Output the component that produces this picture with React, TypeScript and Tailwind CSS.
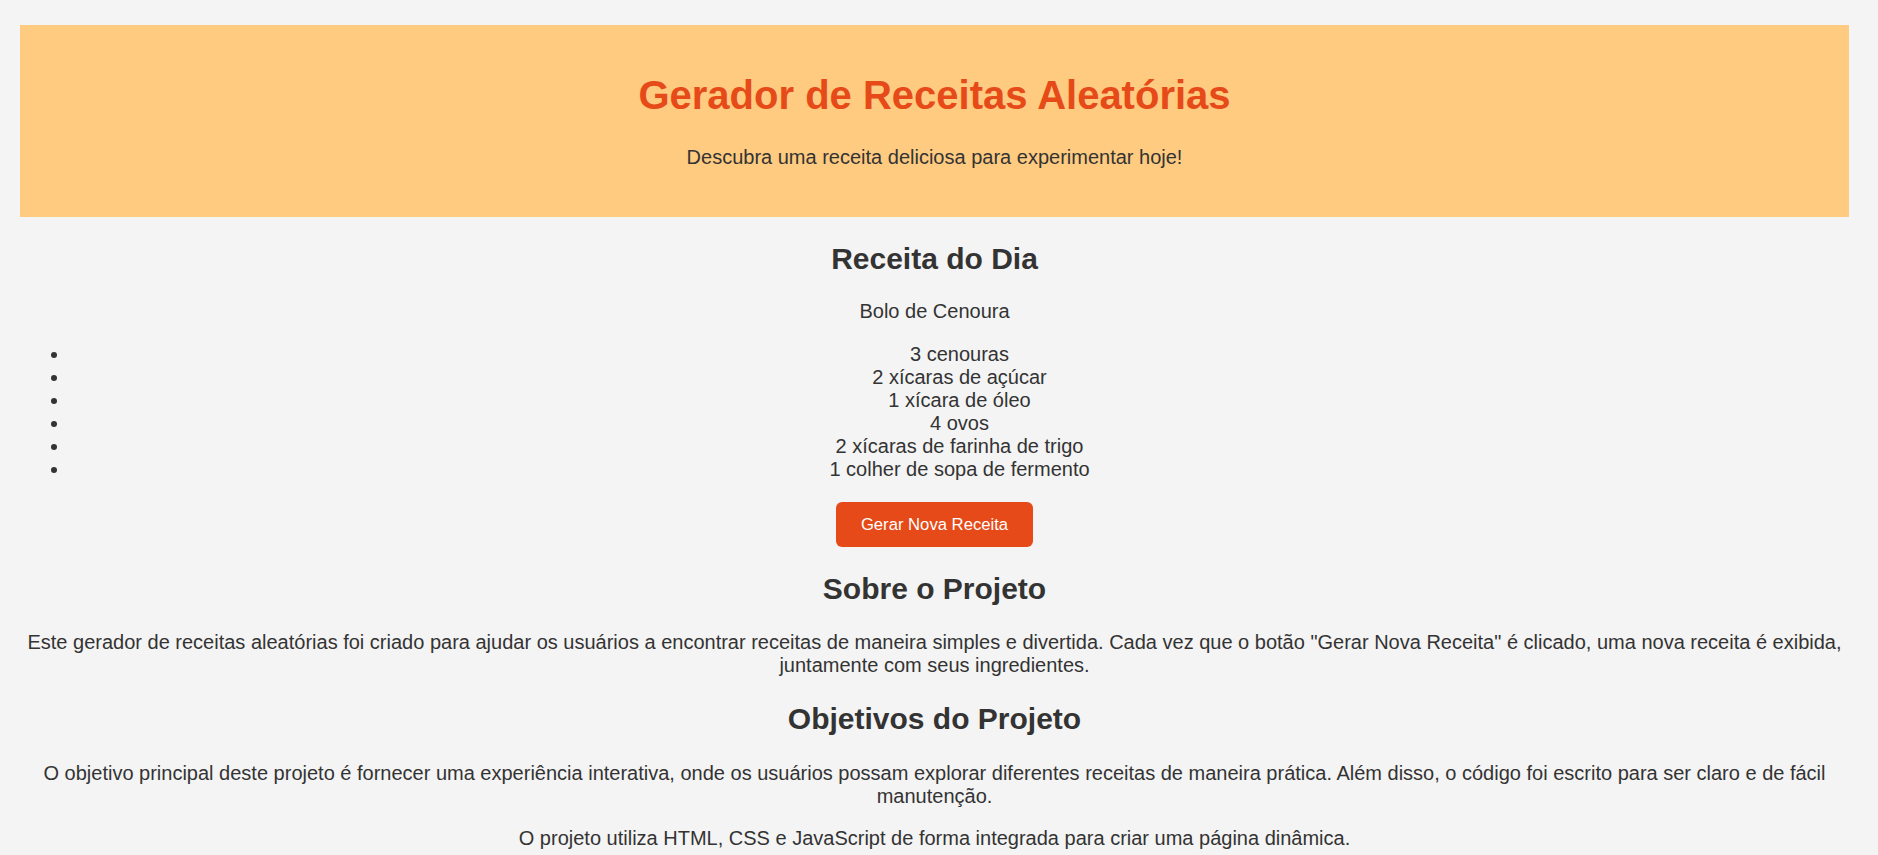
import React from "react";

const ingredientes = [
  "3 cenouras",
  "2 xícaras de açúcar",
  "1 xícara de óleo",
  "4 ovos",
  "2 xícaras de farinha de trigo",
  "1 colher de sopa de fermento",
];

const App = () => {
  return (
    <div className="min-h-screen bg-[#f4f4f4] pt-[25px] pl-[20px] pr-[29px] text-[20px] leading-[23px] text-[#333] font-['Liberation_Sans',Arial,sans-serif]">
      <header className="bg-[#ffcb80] pt-[47px] pb-[48px] text-center">
        <h1 className="text-[40px] leading-[46px] font-bold text-[#e64a19]">
          Gerador de Receitas Aleatórias
        </h1>
        <p className="mt-[28px]">Descubra uma receita deliciosa para experimentar hoje!</p>
      </header>

      <section className="text-center">
        <h2 className="mt-[25px] text-[30px] leading-[34.5px] font-bold">Receita do Dia</h2>
        <p className="mt-[23px]">Bolo de Cenoura</p>
        <ul className="mt-[20px] list-disc pl-[50px]">
          {ingredientes.map((item) => (
            <li key={item}>{item}</li>
          ))}
        </ul>
        <button
          type="button"
          className="mt-[21px] h-[45px] rounded-[6px] bg-[#e64a19] px-[25px] text-[16.67px] leading-[19px] text-white"
        >
          Gerar Nova Receita
        </button>
      </section>

      <section className="text-center">
        <h2 className="mt-[25px] text-[30px] leading-[34.5px] font-bold">Sobre o Projeto</h2>
        <p className="mt-[25px]">
          Este gerador de receitas aleatórias foi criado para ajudar os usuários a encontrar receitas de maneira
          simples e divertida. Cada vez que o botão "Gerar Nova Receita" é clicado, uma nova receita é exibida,
          juntamente com seus ingredientes.
        </p>
      </section>

      <section className="text-center">
        <h2 className="mt-[25px] text-[30px] leading-[34.5px] font-bold">Objetivos do Projeto</h2>
        <p className="mt-[25px]">
          O objetivo principal deste projeto é fornecer uma experiência interativa, onde os usuários possam explorar
          diferentes receitas de maneira prática. Além disso, o código foi escrito para ser claro e de fácil
          manutenção.
        </p>
        <p className="mt-[19px] pb-[20px]">
          O projeto utiliza HTML, CSS e JavaScript de forma integrada para criar uma página dinâmica.
        </p>
      </section>
    </div>
  );
};

export default App;
